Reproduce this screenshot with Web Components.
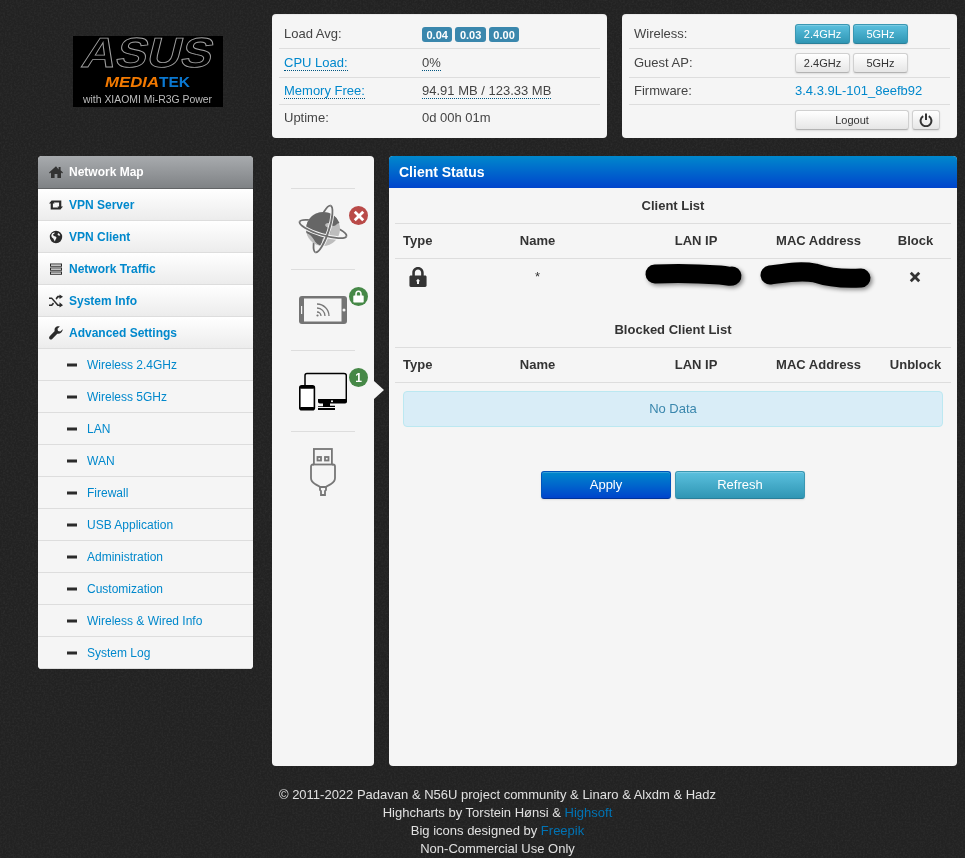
<!DOCTYPE html>
<html lang="en">
<head>
<meta charset="utf-8">
<title>Client Status</title>
<style>
    html, body { margin: 0; padding: 0; }
    body {
        background: #232323;
        color: #333;
        font: 13px/18px "Liberation Sans", Arial, sans-serif;
    }
</style>
</head>
<body>

<page-texture></page-texture>

<router-page>
    <router-logo slot="logo"></router-logo>

    <status-card slot="top">
        <info-row h="28" label-width="138"><span slot="label">Load Avg:</span><load-badge>0.04</load-badge><load-badge>0.03</load-badge><load-badge>0.00</load-badge></info-row>
        <info-row h="28" label-width="138"><dotted-text slot="label" link>CPU Load:</dotted-text><dotted-text>0%</dotted-text></info-row>
        <info-row h="26" label-width="138"><dotted-text slot="label" link>Memory Free:</dotted-text><dotted-text>94.91 MB / 123.33 MB</dotted-text></info-row>
        <info-row h="26" label-width="138" last><span slot="label">Uptime:</span>0d 00h 01m</info-row>
    </status-card>

    <status-card slot="top">
        <info-row h="28" label-width="161"><span slot="label">Wireless:</span><ui-btn kind="info" size="small" w="55">2.4GHz</ui-btn><ui-btn kind="info" size="small" w="55" gap="3">5GHz</ui-btn></info-row>
        <info-row h="28" label-width="161"><span slot="label">Guest AP:</span><ui-btn size="small" w="55">2.4GHz</ui-btn><ui-btn size="small" w="55" gap="3">5GHz</ui-btn></info-row>
        <info-row h="26" label-width="161"><span slot="label">Firmware:</span><a-link>3.4.3.9L-101_8eefb92</a-link></info-row>
        <info-row h="26" label-width="161" last down="4"><ui-btn size="small" w="114">Logout</ui-btn><ui-btn size="small" w="28" gap="3"><ui-icon name="power" size="14"></ui-icon></ui-btn></info-row>
    </status-card>

    <side-nav slot="nav">
        <nav-item icon="home" active>Network Map</nav-item>
        <nav-item icon="retweet">VPN Server</nav-item>
        <nav-item icon="globe">VPN Client</nav-item>
        <nav-item icon="tasks">Network Traffic</nav-item>
        <nav-item icon="random">System Info</nav-item>
        <nav-item icon="wrench">Advanced Settings</nav-item>
        <nav-item sub>Wireless 2.4GHz</nav-item>
        <nav-item sub>Wireless 5GHz</nav-item>
        <nav-item sub>LAN</nav-item>
        <nav-item sub>WAN</nav-item>
        <nav-item sub>Firewall</nav-item>
        <nav-item sub>USB Application</nav-item>
        <nav-item sub>Administration</nav-item>
        <nav-item sub>Customization</nav-item>
        <nav-item sub>Wireless &amp; Wired Info</nav-item>
        <nav-item sub>System Log</nav-item>
    </side-nav>

    <icon-rail slot="rail">
        <rail-tile picture="internet" badge="error"></rail-tile>
        <rail-tile picture="tablet" badge="lock"></rail-tile>
        <rail-tile picture="devices" badge="1" current></rail-tile>
        <rail-tile picture="usb"></rail-tile>
    </icon-rail>

    <client-panel slot="main" heading="Client Status">
        <client-table heading="Client List" action="Block" rowh="53">
            <table-row>
                <ui-icon name="lock" size="20" style="margin-left:13px"></ui-icon>
                <span>*</span>
                <scribble-mark w="100" h="24" d="M9 9 C30 8 60 9 74 10 C84 11 84 12 86 11"></scribble-mark>
                <scribble-mark w="114" h="26" d="M8 11 C23 9 38 6 53 9 C68 14 83 15 99 14"></scribble-mark>
                <ui-icon name="remove" size="12" style="margin-right:2px"></ui-icon>
            </table-row>
        </client-table>
        <client-table heading="Blocked Client List" action="Unblock">
            <no-data>No Data</no-data>
        </client-table>
        <div style="display:flex;justify-content:center;gap:4px;margin-top:44px">
            <ui-btn kind="primary" w="130" h="28">Apply</ui-btn>
            <ui-btn kind="info" w="130" h="28">Refresh</ui-btn>
        </div>
    </client-panel>

    <page-footer slot="footer">
        <div>© 2011-2022 Padavan &amp; N56U project community &amp; Linaro &amp; Alxdm &amp; Hadz</div>
        <div>Highcharts by Torstein Hønsi &amp; <a-link dark>Highsoft</a-link></div>
        <div>Big icons designed by <a-link dark>Freepik</a-link></div>
        <div>Non-Commercial Use Only</div>
    </page-footer>
</router-page>

<script>
// glyphs used across the page, on a 14x14 box
const ICONS = {
    home: '<path d="M7 1.200 0 7.400l.9 1L2 7.500V13h3.600V9h2.800v4H12V7.500l1.100.9.9-1-2.400-2.100V2h-2v2.500z"/>',
    retweet: '<path d="M0 5.500 2.800 2.300 5.600 5.500H3.900V9.400H9.500L11.500 11.600H1.700V5.500zM14 8.500 11.200 11.700 8.400 8.500H10.100V4.600H4.500L2.500 2.400H12.300V8.500z"/>',
    globe: '<path fill-rule="evenodd" d="M7 .8a6.200 6.200 0 1 0 0 12.400A6.200 6.200 0 0 0 7 .8zM3 3.600c1-.8 2-1 3-1L5 4 3.800 4.600 4.800 6l1.800.4 1 1.400-1 1.600-.8 2C4.700 10 4.800 8.600 3.600 8 2.800 7.600 2.400 6.600 2.300 5.600zM9 3c1 .4 1.800 1.200 2.300 2.200l-1 .6L8.600 5z"/>',
    tasks: '<path fill-rule="evenodd" d="M1 1.500h12v3.200H1zM1 5.500h12v3.200H1zM1 9.500h12v3.200H1zM2 2.400v1.400h10V2.400zM2 6.400v1.400h10V6.400zM2 10.400v1.400h10v-1.400z"/>',
    random: '<path d="M10.500 2v1.700H9.300L7.600 6 6.500 4.600l2-2.600h2zm0-1.200L14 3l-3.500 2.400zM0 3.700h3l6.300 7h1.200v1.700h-2l-6-7H0zM0 10.700h2.300l1.700-2 1.100 1.400-2 2.300H0zM10.500 8.600 14 11.500l-3.500 2.400z" transform="translate(0 -.300)"/>',
    wrench: '<path d="M13.700 3.300 11.200 5.500 9 5 8.500 2.800 10.800.4C9.200-.2 7.400.3 6.400 1.500 5.500 2.500 5.300 3.900 5.700 5.100L.7 10.300c-.8.800-.8 1.900-.1 2.600s1.800.7 2.600 0l5.100-5.200c1.300.4 2.700.1 3.700-.9 1.200-1.100 1.800-2.800 1.700-3.500z"/>',
    minus: '<rect x="2" y="5.500" width="10" height="3"/>',
    remove: '<path d="M3.200.9 7 4.700 10.800.9l2.300 2.300L9.300 7l3.800 3.800-2.300 2.300L7 9.300l-3.800 3.800-2.300-2.300L4.700 7 .9 3.200z"/>',
    lock: '<path fill-rule="evenodd" d="M7 0C4.600 0 3 1.700 3 4.100V6H2c-.6 0-1 .4-1 1v6c0 .6.400 1 1 1h10c.6 0 1-.4 1-1V7c0-.6-.4-1-1-1h-1V4.100C11 1.700 9.400 0 7 0zM4.800 6V4.100C4.800 2.700 5.700 1.800 7 1.800s2.200.9 2.200 2.300V6zM7 8.300l1.500 1.600h-.8v2H6.300v-2h-.8z"/>',
    padlock: '<path fill-rule="evenodd" d="M7 .5C4.800.5 3.500 2 3.500 4.200V6H2.200c-.5 0-.8.3-.8.8v5.900c0 .5.300.8.800.8h9.600c.5 0 .8-.3.800-.8V6.800c0-.5-.3-.8-.8-.8h-1.300V4.200C10.500 2 9.200.5 7 .5zM5.200 6V4.200C5.200 3 5.900 2.200 7 2.200s1.800.8 1.800 2V6z"/>',
    power: '<path fill="none" stroke="currentColor" stroke-width="2" d="M4.200 3.200a5.400 5.400 0 1 0 5.600 0"/><rect x="6" y="0.500" width="2" height="6.500"/>'
}

// the big pictures of the left rail
const PICTURES = {
    internet: `<svg width="52" height="52" viewBox="0 0 52 52">
        <g fill="none" stroke="#6f6f6f" stroke-width="1.800">
            <ellipse rx="24.500" ry="6" transform="translate(26 26) rotate(17)"/>
            <ellipse rx="24.500" ry="6" transform="translate(26 26) rotate(-72)"/>
        </g>
        <circle cx="26" cy="26" r="17" fill="#bdbdbd"/>
        <path d="M26 9a17 17 0 0 0-16.500 21c3 1 5 3 7 6 2 4 5 6 8 7 1-4 0-7 3-9 2-2 6-2 6-6 0-3-3-3-5-5-1-2 1-3 3-3s3 3 5 3c3 0 3-3 6-3a17 17 0 0 0-16.500-11z" fill="#666"/>
        <g fill="none" stroke="#f5f5f5" stroke-width="3.600">
            <path d="M-24.500 0A24.500 6 0 0 0 24.500 0" transform="translate(26 26) rotate(17)"/>
            <path d="M-24.500 0A24.500 6 0 0 0 24.500 0" transform="translate(26 26) rotate(-72)"/>
        </g>
        <g fill="none" stroke="#6f6f6f" stroke-width="1.800">
            <path d="M-24.500 0A24.500 6 0 0 0 24.500 0" transform="translate(26 26) rotate(17)"/>
            <path d="M-24.500 0A24.500 6 0 0 0 24.500 0" transform="translate(26 26) rotate(-72)"/>
        </g>
    </svg>`,
    tablet: `<svg width="48" height="28" viewBox="0 0 48 28">
        <rect width="48" height="28" rx="3" fill="#747474"/>
        <rect x="5" y="2.500" width="37.500" height="23" fill="#f5f5f5"/>
        <rect x="2" y="10" width="1.200" height="8" fill="#f5f5f5"/>
        <circle cx="45" cy="14" r="1.500" fill="#f5f5f5"/>
        <g fill="none" stroke="#777" stroke-width="1.300">
            <path d="M18 8c6.600 0 12 5.400 12 12"/>
            <path d="M18 12c4.400 0 8 3.600 8 8"/>
            <path d="M18 16c2.200 0 4 1.800 4 4"/>
        </g>
        <circle cx="18.500" cy="19.500" r="1.100" fill="#777"/>
    </svg>`,
    devices: `<svg width="48" height="40" viewBox="0 -2 48 40">
        <path d="M6 12V2.500C6 1.300 6.800.5 8 .5h37c1.300 0 2.300.8 2.300 2V29" fill="none" stroke="#000" stroke-width="1.500"/>
        <path d="M19 26h29v2.500c0 1.300-.8 2-2 2H21c-1.300 0-2-.7-2-2z" fill="#000"/>
        <circle cx="33" cy="28.300" r="1" fill="#fff"/>
        <path d="M24 30h7v2.800h5V37H19v-3.800h5z" fill="#000"/>
        <rect x="19" y="34" width="18" height="1" fill="#f5f5f5"/>
        <rect x="0.800" y="12.800" width="14.600" height="24" rx="2" fill="#fff" stroke="#000" stroke-width="1.600"/>
        <rect x="0.800" y="12.800" width="14.600" height="3" rx="1.500" fill="#000"/>
        <rect x="0.800" y="34" width="14.600" height="2.800" rx="1.400" fill="#000"/>
    </svg>`,
    usb: `<svg width="26" height="48" viewBox="0 0 26 48">
        <g fill="none" stroke="#777" stroke-width="1.800">
            <rect x="3.900" y="1" width="18" height="15.500"/>
            <rect x="7.500" y="9" width="3.500" height="3.500"/>
            <rect x="15" y="9" width="3.500" height="3.500"/>
            <path d="M3.900 16.500H3c-1.300 0-2 .8-2 2V30c0 3 1.500 4.500 4 6 2.500 1.500 4 2 5 3h6c1-1 2.500-1.500 5-3 2.500-1.500 4-3 4-6V18.500c0-1.200-.7-2-2-2h-1"/>
            <path d="M10 39h6v3l-1 1v4h-4v-4l-1-1z"/>
        </g>
    </svg>`
}

class PageTexture extends HTMLElement {
    constructor() {
        super()
        this.attachShadow({ mode: "open" })
    }

    connectedCallback() {
        this.shadowRoot.innerHTML = `
        <style>
            :host { display: block; position: fixed; inset: 0; z-index: -1; }
            svg { display: block; width: 100%; height: 100%; }
        </style>
        <svg>
            <filter id="grain" x="0" y="0" width="100%" height="100%">
                <feTurbulence type="fractalNoise" baseFrequency="0.55" numOctaves="2" seed="4"/>
                <feColorMatrix values="0 0 0 0 1  0 0 0 0 1  0 0 0 0 1  .9 0 0 0 -.33"/>
            </filter>
            <rect width="100%" height="100%" fill="#222"/>
            <rect width="100%" height="100%" filter="url(#grain)" opacity=".1"/>
        </svg>`
    }
}
customElements.define('page-texture', PageTexture)

class RouterPage extends HTMLElement {
    constructor() {
        super()
        this.attachShadow({ mode: "open" })
    }

    connectedCallback() {
        this.shadowRoot.innerHTML = `
        <style>
            :host {
                display: grid;
                grid-template-columns: 215px 1fr;
                column-gap: 19px;
                padding: 14px 8px 0 38px;
            }
            .logo { padding: 22px 0 0 35px; height: 102px; }
            .top { display: grid; grid-template-columns: 335px 335px; column-gap: 15px; height: 124px; }
            .nav { margin-top: 18px; }
            .work { margin-top: 18px; display: flex; gap: 15px; height: 610px; }
            .footer { grid-column: 1 / -1; margin-top: 20px; }
        </style>
        <div class="logo"><slot name="logo"></slot></div>
        <div class="top"><slot name="top"></slot></div>
        <div class="nav"><slot name="nav"></slot></div>
        <div class="work"><slot name="rail"></slot><slot name="main"></slot></div>
        <div class="footer"><slot name="footer"></slot></div>
        `
    }
}
customElements.define('router-page', RouterPage)

class RouterLogo extends HTMLElement {
    constructor() {
        super()
        this.attachShadow({ mode: "open" })
    }

    connectedCallback() {
        this.shadowRoot.innerHTML = `
        <style>
            :host { display: block; width: 150px; height: 71px; background: #000; }
            svg { display: block; overflow: visible; }
            text { font-family: "Liberation Sans", Arial, sans-serif; }
        </style>
        <svg width="150" height="71" viewBox="0 0 150 71">
            <text x="0" y="0" transform="translate(7 31) skewX(-14)" font-size="42" font-weight="700" textLength="130" lengthAdjust="spacingAndGlyphs" fill="#000" stroke="#a0a0a0" stroke-width=".9">ASUS</text>
            <text x="32" y="50.500" font-size="14" font-weight="700" font-style="italic" textLength="54" lengthAdjust="spacingAndGlyphs" fill="#f47a00">MEDIA</text>
            <text x="86" y="50.500" font-size="14" font-weight="700" textLength="31" lengthAdjust="spacingAndGlyphs" fill="#0a78d2">TEK</text>
            <text x="10" y="66.500" font-size="10" textLength="129" lengthAdjust="spacingAndGlyphs" fill="#bdbdbd">with XIAOMI Mi-R3G Power</text>
        </svg>
        `
    }
}
customElements.define('router-logo', RouterLogo)

class UiIcon extends HTMLElement {
    constructor() {
        super()
        this.attachShadow({ mode: "open" })
    }

    connectedCallback() {
        const size = this.getAttribute("size") || 14
        this.shadowRoot.innerHTML = `
        <style>
            :host { display: inline-block; width: ${size}px; height: ${size}px; line-height: 0; }
            svg { display: block; fill: currentColor; }
        </style>
        <svg width="${size}" height="${size}" viewBox="0 0 14 14">${ICONS[this.getAttribute("name")]}</svg>
        `
    }
}
customElements.define('ui-icon', UiIcon)

class StatusCard extends HTMLElement {
    constructor() {
        super()
        this.attachShadow({ mode: "open" })
    }

    connectedCallback() {
        this.shadowRoot.innerHTML = `
        <style>
            :host {
                display: block;
                background: #f5f5f5;
                border-radius: 4px;
                padding: 6px 7px;
                color: #444;
                box-shadow: inset 0 1px 1px rgba(0, 0, 0, .05);
            }
        </style>
        <slot></slot>
        `
    }
}
customElements.define('status-card', StatusCard)

class InfoRow extends HTMLElement {
    constructor() {
        super()
        this.attachShadow({ mode: "open" })
    }

    connectedCallback() {
        const h = this.getAttribute("h")
        const labelWidth = this.getAttribute("label-width")
        const down = this.getAttribute("down") || 0
        this.shadowRoot.innerHTML = `
        <style>
            :host {
                display: flex;
                align-items: center;
                box-sizing: content-box;
                height: ${h}px;
                padding-left: 5px;
                border-bottom: 1px solid ${this.hasAttribute("last") ? "transparent" : "#ddd"};
            }
            .label { width: ${labelWidth}px; flex: none; }
            .value { display: flex; align-items: center; margin-top: ${down}px; }
        </style>
        <div class="label"><slot name="label"></slot></div>
        <div class="value"><slot></slot></div>
        `
    }
}
customElements.define('info-row', InfoRow)

class LoadBadge extends HTMLElement {
    constructor() {
        super()
        this.attachShadow({ mode: "open" })
    }

    connectedCallback() {
        this.shadowRoot.innerHTML = `
        <style>
            :host {
                display: inline-block;
                background: #3a87ad;
                color: #fff;
                font-size: 11px;
                font-weight: bold;
                line-height: 14px;
                padding: 1px 4.500px 0;
                height: 14px;
                border-radius: 3px;
                margin-right: 3px;
            }
        </style>
        <slot></slot>
        `
    }
}
customElements.define('load-badge', LoadBadge)

class DottedText extends HTMLElement {
    constructor() {
        super()
        this.attachShadow({ mode: "open" })
    }

    connectedCallback() {
        this.shadowRoot.innerHTML = `
        <style>
            :host {
                display: inline-block;
                line-height: 15px;
                color: ${this.hasAttribute("link") ? "#0088cc" : "#444"};
                border-bottom: 1px dotted #005580;
            }
        </style>
        <slot></slot>
        `
    }
}
customElements.define('dotted-text', DottedText)

class ALink extends HTMLElement {
    constructor() {
        super()
        this.attachShadow({ mode: "open" })
    }

    connectedCallback() {
        this.shadowRoot.innerHTML = `
        <style>
            :host { display: inline; color: ${this.hasAttribute("dark") ? "#0073b4" : "#0088cc"}; cursor: pointer; }
        </style>
        <slot></slot>
        `
    }
}
customElements.define('a-link', ALink)

class UiBtn extends HTMLElement {
    constructor() {
        super()
        this.attachShadow({ mode: "open" })
    }

    connectedCallback() {
        const kind = this.getAttribute("kind") || "default"
        const small = this.getAttribute("size") === "small"
        const h = this.getAttribute("h") || 20
        const looks = {
            default: "background:linear-gradient(#fff,#e6e6e6);color:#333;border-color:#d0d0d0 #d0d0d0 #b3b3b3;",
            info: "background:linear-gradient(#5bc0de,#2f96b4);color:#fff;border-color:#3a97b2 #3a97b2 #2a7f99;",
            primary: "background:linear-gradient(#0088cc,#0044cc);color:#fff;border-color:#0055bb #0055bb #003399;"
        }
        this.shadowRoot.innerHTML = `
        <style>
            :host {
                display: inline-flex;
                align-items: center;
                justify-content: center;
                box-sizing: border-box;
                width: ${this.getAttribute("w")}px;
                height: ${h}px;
                margin-left: ${this.getAttribute("gap") || 0}px;
                border: 1px solid;
                border-radius: 3px;
                font-size: ${small ? 11 : 13}px;
                cursor: pointer;
                box-shadow: inset 0 1px 0 rgba(255, 255, 255, .2), 0 1px 2px rgba(0, 0, 0, .1);
                ${looks[kind]}
            }
        </style>
        <slot></slot>
        `
    }
}
customElements.define('ui-btn', UiBtn)

class SideNav extends HTMLElement {
    constructor() {
        super()
        this.attachShadow({ mode: "open" })
    }

    connectedCallback() {
        this.shadowRoot.innerHTML = `
        <style>
            :host {
                display: block;
                width: 215px;
                border-radius: 4px;
                overflow: hidden;
                background: #f5f5f5;
            }
        </style>
        <slot></slot>
        `
    }
}
customElements.define('side-nav', SideNav)

class NavItem extends HTMLElement {
    constructor() {
        super()
        this.attachShadow({ mode: "open" })
    }

    connectedCallback() {
        const active = this.hasAttribute("active")
        const sub = this.hasAttribute("sub")
        let look = "background:linear-gradient(#fff,#ececec);border-bottom:1px solid #ddd;color:#0088cc;font-weight:bold;padding-left:11px;"
        if (active) look = "background:linear-gradient(#a8abae,#7f8285);border-bottom:1px solid #626466;color:#fff;font-weight:bold;padding-left:11px;height:33px;"
        if (sub) look = "background:#f5f5f5;border-bottom:1px solid #ddd;color:#0088cc;padding-left:27px;"
        const name = sub ? "minus" : this.getAttribute("icon")
        this.shadowRoot.innerHTML = `
        <style>
            :host {
                display: flex;
                align-items: center;
                box-sizing: border-box;
                height: 32px;
                font-size: 12px;
                ${look}
            }
            ui-icon { color: ${active ? "#333" : "#2b2b2b"}; margin-right: ${sub ? 8 : 6}px; }
        </style>
        <ui-icon name="${name}"></ui-icon><slot></slot>
        `
    }
}
customElements.define('nav-item', NavItem)

class IconRail extends HTMLElement {
    constructor() {
        super()
        this.attachShadow({ mode: "open" })
    }

    connectedCallback() {
        this.shadowRoot.innerHTML = `
        <style>
            :host {
                display: block;
                box-sizing: border-box;
                width: 102px;
                flex: none;
                padding-top: 32px;
                background: #f5f5f5;
                border-radius: 4px;
            }
        </style>
        <slot></slot>
        `
    }
}
customElements.define('icon-rail', IconRail)

class RailTile extends HTMLElement {
    constructor() {
        super()
        this.attachShadow({ mode: "open" })
    }

    connectedCallback() {
        const badge = this.getAttribute("badge")
        let badgeHtml = ""
        if (badge === "error") badgeHtml = `<div class="badge red"><ui-icon name="remove" size="12"></ui-icon></div>`
        else if (badge === "lock") badgeHtml = `<div class="badge green"><ui-icon name="padlock" size="13"></ui-icon></div>`
        else if (badge) badgeHtml = `<div class="badge green">${badge}</div>`
        this.shadowRoot.innerHTML = `
        <style>
            :host {
                display: block;
                position: relative;
                height: 80px;
                margin: 0 19px;
                border-top: 1px solid #ddd;
            }
            .pic { display: flex; justify-content: center; align-items: center; height: 80px; }
            .pic svg { display: block; }
            .badge {
                position: absolute;
                right: -13px;
                top: 17px;
                width: 19px;
                height: 19px;
                border-radius: 50%;
                display: flex;
                align-items: center;
                justify-content: center;
                color: #fff;
                font-weight: bold;
                font-size: 12px;
            }
            .red { background: #b94a48; }
            .green { background: #468847; }
            .arrow {
                position: absolute;
                left: 83px;
                top: 30px;
                width: 0;
                height: 0;
                border: 9px solid transparent;
                border-left: 10px solid #f5f5f5;
                border-right: 0;
            }
        </style>
        <div class="pic">${PICTURES[this.getAttribute("picture")]}</div>
        ${badgeHtml}
        ${this.hasAttribute("current") ? '<div class="arrow"></div>' : ""}
        `
    }
}
customElements.define('rail-tile', RailTile)

class ClientPanel extends HTMLElement {
    constructor() {
        super()
        this.attachShadow({ mode: "open" })
    }

    connectedCallback() {
        this.shadowRoot.innerHTML = `
        <style>
            :host {
                display: block;
                flex: 1;
                background: #f5f5f5;
                border-radius: 4px;
                overflow: hidden;
            }
            .head {
                height: 32px;
                line-height: 32px;
                padding-left: 10px;
                color: #fff;
                font-size: 14px;
                font-weight: bold;
                background: linear-gradient(#0088cc, #0044cc);
            }
            .body { padding: 0 6px; }
        </style>
        <div class="head">${this.getAttribute("heading")}</div>
        <div class="body"><slot></slot></div>
        `
    }
}
customElements.define('client-panel', ClientPanel)

const TABLE_COLUMNS = "45px 195px 122px 123px 71px"

class ClientTable extends HTMLElement {
    constructor() {
        super()
        this.attachShadow({ mode: "open" })
    }

    connectedCallback() {
        const rowh = this.getAttribute("rowh")
        this.shadowRoot.innerHTML = `
        <style>
            :host { display: block; color: #333; }
            .title {
                height: 35px;
                line-height: 35px;
                text-align: center;
                font-weight: bold;
                border-bottom: 1px solid #ddd;
            }
            .head {
                display: grid;
                grid-template-columns: ${TABLE_COLUMNS};
                height: 34px;
                align-items: center;
                text-align: center;
                font-weight: bold;
                border-bottom: 1px solid #ddd;
            }
            .head span:first-child { text-align: left; padding-left: 8px; }
            .rows { ${rowh ? `height: ${rowh}px;` : ""} }
        </style>
        <div class="title">${this.getAttribute("heading")}</div>
        <div class="head">
            <span>Type</span><span>Name</span><span>LAN IP</span><span>MAC Address</span><span>${this.getAttribute("action")}</span>
        </div>
        <div class="rows"><slot></slot></div>
        `
    }
}
customElements.define('client-table', ClientTable)

class TableRow extends HTMLElement {
    constructor() {
        super()
        this.attachShadow({ mode: "open" })
    }

    connectedCallback() {
        this.shadowRoot.innerHTML = `
        <style>
            :host {
                display: grid;
                grid-template-columns: ${TABLE_COLUMNS};
                justify-items: center;
                align-items: center;
                height: 36px;
            }
            ::slotted(:first-child) { justify-self: start; }
        </style>
        <slot></slot>
        `
    }
}
customElements.define('table-row', TableRow)

class ScribbleMark extends HTMLElement {
    constructor() {
        super()
        this.attachShadow({ mode: "open" })
    }

    connectedCallback() {
        const w = this.getAttribute("w")
        const h = this.getAttribute("h")
        this.shadowRoot.innerHTML = `
        <style>
            :host { display: block; line-height: 0; }
            svg { display: block; overflow: visible; filter: drop-shadow(2px 2px 2px rgba(0, 0, 0, .45)); }
        </style>
        <svg width="${w}" height="${h}" viewBox="0 0 ${w} ${h}">
            <path d="${this.getAttribute("d")}" fill="none" stroke="#000" stroke-width="19" stroke-linecap="round"/>
        </svg>
        `
    }
}
customElements.define('scribble-mark', ScribbleMark)

class NoData extends HTMLElement {
    constructor() {
        super()
        this.attachShadow({ mode: "open" })
    }

    connectedCallback() {
        this.shadowRoot.innerHTML = `
        <style>
            :host {
                display: block;
                box-sizing: border-box;
                margin: 8px 8px 0;
                height: 36px;
                line-height: 34px;
                text-align: center;
                color: #3a87ad;
                background: #d9edf7;
                border: 1px solid #bce8f1;
                border-radius: 4px;
            }
        </style>
        <slot></slot>
        `
    }
}
customElements.define('no-data', NoData)

class PageFooter extends HTMLElement {
    constructor() {
        super()
        this.attachShadow({ mode: "open" })
    }

    connectedCallback() {
        this.shadowRoot.innerHTML = `
        <style>
            :host {
                display: block;
                text-align: center;
                color: #e0e0e0;
                line-height: 18px;
            }
        </style>
        <slot></slot>
        `
    }
}
customElements.define('page-footer', PageFooter)
</script>
</body>
</html>
